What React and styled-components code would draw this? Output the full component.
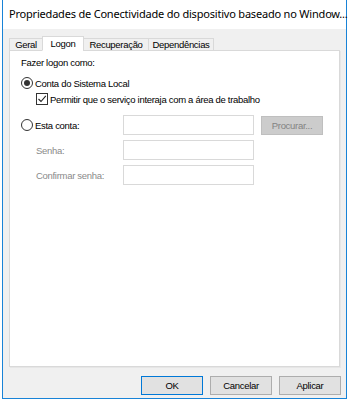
import styled, { createGlobalStyle } from "styled-components";

const GlobalStyle = createGlobalStyle`
  html, body {
    margin: 0;
    padding: 0;
    background: #ffffff;
  }
  body {
    font-family: "Liberation Sans", Arial, sans-serif;
    color: #000;
  }
`;

const Window = styled.div`
  box-sizing: border-box;
  width: 345px;
  height: 399px;
  margin-left: 2px;
  border: 1px solid #1883d7;
  border-top: none;
  background: #f0f0f0;
  display: flex;
  flex-direction: column;
`;

const TitleBar = styled.div`
  height: 29px;
  flex-shrink: 0;
  background: #fff;
  display: flex;
  align-items: center;
  justify-content: space-between;
  padding: 0 7px 0 6px;
`;

const Title = styled.div`
  font-family: "Noto Sans", "Liberation Sans", sans-serif;
  font-size: 11px;
  letter-spacing: -0.2px;
  white-space: nowrap;
  padding-bottom: 2px;
`;

const Body = styled.div`
  flex: 1;
  display: flex;
  flex-direction: column;
  padding: 7px 5px 0 6px;
  font-size: 9.5px;
  letter-spacing: -0.3px;
`;

const TabStrip = styled.div`
  display: flex;
  align-items: flex-end;
  height: 15px;
  position: relative;
  z-index: 1;
  margin-bottom: -1px;
`;

const Tab = styled.div`
  box-sizing: border-box;
  width: ${({ w }) => w}px;
  height: ${({ active }) => (active ? 15 : 13)}px;
  margin-left: ${({ first }) => (first ? 0 : -1)}px;
  border: 1px solid #d9d9d9;
  border-bottom: ${({ active }) => (active ? "1px solid #fff" : "1px solid #d9d9d9")};
  background: ${({ active }) => (active ? "#fff" : "#f0f0f0")};
  display: flex;
  align-items: ${({ active }) => (active ? "flex-start" : "center")};
  justify-content: center;
  padding-top: ${({ active }) => (active ? 1 : 0)}px;
  white-space: nowrap;
`;

const Panel = styled.div`
  box-sizing: border-box;
  width: 331px;
  height: 317px;
  background: #fff;
  border: 1px solid #d9d9d9;
  box-shadow: 1px 1px 0 #e6e6e6;
  padding: 6px 0 0 11px;
  display: flex;
  flex-direction: column;
`;

const Legend = styled.div`
  height: 12px;
  line-height: 12px;
`;

const OptionRow = styled.div`
  display: flex;
  align-items: center;
  gap: 2px;
  height: 12px;
  margin-left: ${({ indent }) => indent || 0}px;
  margin-top: ${({ top }) => top || 0}px;
  white-space: nowrap;
`;

const Radio = styled.span`
  box-sizing: border-box;
  width: 12px;
  height: 12px;
  border-radius: 50%;
  border: 1px solid #333;
  background: #fff;
  display: flex;
  align-items: center;
  justify-content: center;
  flex-shrink: 0;

  &::after {
    content: "";
    width: 6px;
    height: 6px;
    border-radius: 50%;
    background: ${({ checked }) => (checked ? "#333" : "transparent")};
  }
`;

const Box = styled.span`
  box-sizing: border-box;
  width: 12px;
  height: 12px;
  border: 1px solid #333;
  background: #fff;
  display: flex;
  align-items: center;
  justify-content: center;
  flex-shrink: 0;
`;

const AccountGrid = styled.div`
  display: grid;
  grid-template-columns: minmax(0, 95px) minmax(0, 131px) minmax(0, 62px);
  grid-auto-rows: 20px;
  column-gap: 7px;
  row-gap: 5px;
  margin-top: 10px;
  align-items: center;
`;

const FieldLabel = styled.span`
  color: #8a8a8a;
  padding-left: 15px;
  white-space: nowrap;
`;

const Input = styled.div`
  box-sizing: border-box;
  height: 20px;
  background: #fff;
  border: 1px solid #d9d9d9;
`;

const DisabledButton = styled.div`
  box-sizing: border-box;
  height: 19px;
  background: #cccccc;
  border: 1px solid #bfbfbf;
  color: #838383;
  display: flex;
  align-items: center;
  justify-content: center;
`;

const Footer = styled.div`
  display: flex;
  justify-content: flex-end;
  gap: 7px;
  padding-top: 9px;
`;

const Button = styled.div`
  box-sizing: border-box;
  width: 62px;
  height: 19px;
  background: #e1e1e1;
  border: 1px solid ${({ primary }) => (primary ? "#0078d7" : "#adadad")};
  display: flex;
  align-items: center;
  justify-content: center;
`;

const tabs = [
  { label: "Geral", w: 34 },
  { label: "Logon", w: 42, active: true },
  { label: "Recuperação", w: 66 },
  { label: "Dependências", w: 66 },
];

const CloseIcon = () => (
  <svg width="11" height="11" viewBox="0 0 11 11">
    <path d="M0.5 0.5 L10.5 10.5 M10.5 0.5 L0.5 10.5" stroke="#111" strokeWidth="1" />
  </svg>
);

const CheckMark = () => (
  <svg width="10" height="10" viewBox="0 0 10 10">
    <path d="M1.5 5 L4 7.5 L8.8 1.8" stroke="#222" strokeWidth="1.1" fill="none" />
  </svg>
);

const App = () => (
  <>
    <GlobalStyle />
    <Window>
      <TitleBar>
        <Title>Propriedades de Conectividade do dispositivo baseado no Window...</Title>
        <CloseIcon />
      </TitleBar>
      <Body>
        <TabStrip>
          {tabs.map((t, i) => (
            <Tab key={t.label} w={t.w} active={t.active} first={i === 0}>
              {t.label}
            </Tab>
          ))}
        </TabStrip>
        <Panel>
          <Legend>Fazer logon como:</Legend>
          <OptionRow top={8}>
            <Radio checked />
            <span>Conta do Sistema Local</span>
          </OptionRow>
          <OptionRow indent={15} top={4}>
            <Box>
              <CheckMark />
            </Box>
            <span>Permitir que o serviço interaja com a área de trabalho</span>
          </OptionRow>
          <AccountGrid>
            <OptionRow>
              <Radio />
              <span>Esta conta:</span>
            </OptionRow>
            <Input />
            <DisabledButton>Procurar...</DisabledButton>
            <FieldLabel>Senha:</FieldLabel>
            <Input />
            <span />
            <FieldLabel>Confirmar senha:</FieldLabel>
            <Input />
          </AccountGrid>
        </Panel>
        <Footer>
          <Button primary>OK</Button>
          <Button>Cancelar</Button>
          <Button>Aplicar</Button>
        </Footer>
      </Body>
    </Window>
  </>
);

export default App;
